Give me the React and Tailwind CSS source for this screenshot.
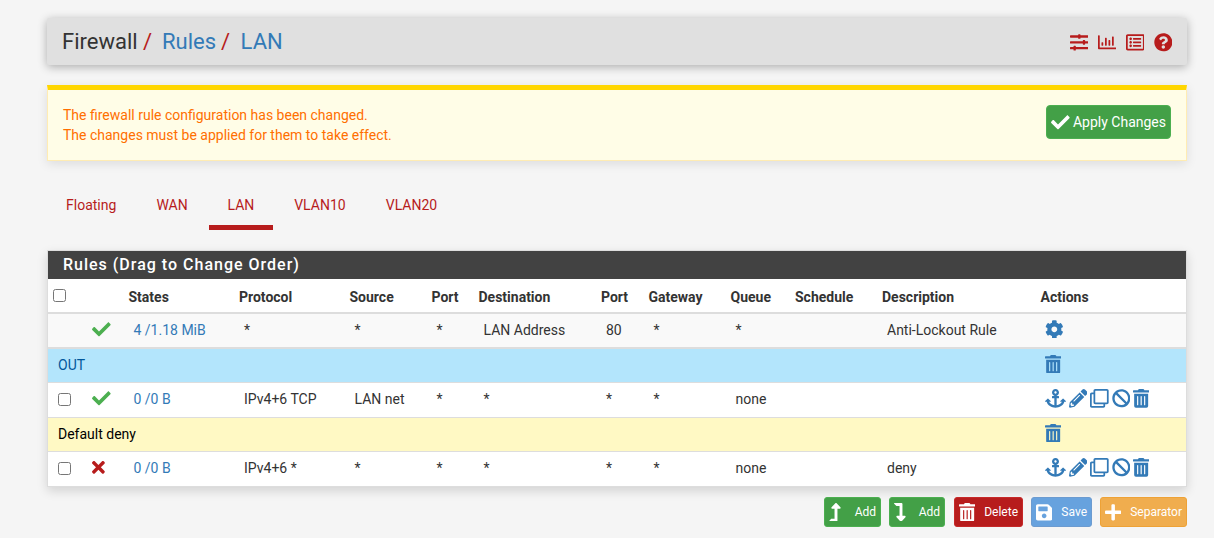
import {
  FaSlidersH, FaRegChartBar, FaRegListAlt, FaQuestionCircle, FaCheck, FaTimes, FaCog,
  FaTrashAlt, FaAnchor, FaPencilAlt, FaRegClone, FaBan, FaLevelUpAlt, FaLevelDownAlt, FaSave, FaPlus,
} from "react-icons/fa";

const tabs = ["Floating", "WAN", "LAN", "VLAN10", "VLAN20"];
const headings = ["States", "Protocol", "Source", "Port", "Destination", "Port", "Gateway", "Queue", "Schedule", "Description", "Actions"];

function Icon({ as: Glyph, w = "w-[18.66px]", className = "" }) {
  return (
    <span className={`inline-flex h-[18.66px] shrink-0 items-center justify-center ${w} ${className}`}>
      <Glyph className="h-full w-full" />
    </span>
  );
}

const trashWidth = "w-[16.33px]";

function RuleActions() {
  return (
    <div className="flex items-center gap-[2.8px] text-[#337ab7]">
      <Icon as={FaAnchor} w="w-[21px]" />
      <Icon as={FaPencilAlt} />
      <Icon as={FaRegClone} />
      <Icon as={FaBan} />
      <Icon as={FaTrashAlt} w={trashWidth} />
    </div>
  );
}

function Rule({ check, state, cells, actions, actionsPad = "pb-[3px]", className }) {
  return (
    <tr className={className}>
      <td className="pb-[2px] pl-[10px]">{check && <input type="checkbox" className="block h-[13px] w-[13px]" />}</td>
      <td className="pt-[2px] pl-[10px]">
        {state === "pass" ? (
          <Icon as={FaCheck} className="flex text-[#4caf50]" />
        ) : (
          <Icon as={FaTimes} w="w-[12.83px]" className="flex text-[#b71c1c]" />
        )}
      </td>
      {cells.map((c, i) => (
        <td key={i} className={i === 0 ? "pb-[2px] pl-[10px] text-[#337ab7]" : "pb-[2px] pl-[10px]"}>{c}</td>
      ))}
      <td className={`pl-[9.3px] ${actionsPad}`}>{actions}</td>
    </tr>
  );
}

function Separator({ label, className }) {
  return (
    <tr className={className}>
      <td colSpan={12} className="pb-[2px] pl-[10px]">{label}</td>
      <td className="pt-[2px] pl-[9.3px]"><Icon as={FaTrashAlt} w={trashWidth} className="flex text-[#337ab7]" /></td>
    </tr>
  );
}

function Button({ icon, label, iconWidth, className }) {
  return (
    <button className={`flex h-[30px] items-center justify-between rounded-[3px] border px-[4px] text-[12px] text-white ${className}`}>
      <Icon as={icon} w={iconWidth} />
      <span>{label}</span>
    </button>
  );
}

export default function App() {
  return (
    <div className="h-[538px] w-[1214px] overflow-hidden bg-[#f5f5f5] pt-[18px] pr-[27px] pl-[47px] font-[Roboto,sans-serif] text-[14px] leading-[20px] text-[#333]">
      <header className="flex h-[47px] items-center justify-between rounded-[2px] bg-[#e0e0e0] pr-[14.7px] pl-[15px] shadow-[0_2px_10px_rgba(0,0,0,0.3)]">
        <h1 className="flex text-[22px] leading-[24px]">
          <span className="w-[81px]">Firewall</span>
          <span className="w-[19px] text-[#b71c1c]">/</span>
          <span className="w-[59px] text-[#337ab7]">Rules</span>
          <span className="w-[19.6px] text-[#b71c1c]">/</span>
          <span className="text-[#337ab7]">LAN</span>
        </h1>
        <div className="flex gap-[9.3px] pt-[2px] text-[#b71c1c]">
          <Icon as={FaSlidersH} />
          <Icon as={FaRegChartBar} />
          <Icon as={FaRegListAlt} />
          <Icon as={FaQuestionCircle} />
        </div>
      </header>

      <section className="mt-[20px] flex h-[76px] items-start justify-between border border-t-[5px] border-[#ffecb3] border-t-[#ffd600] bg-[#fffde7] pt-[15px] pr-[15px] pl-[15px] text-[#ff6f00] shadow-[0_3px_10px_rgba(0,0,0,0.1)]">
        <p>
          The firewall rule configuration has been changed.
          <br />
          The changes must be applied for them to take effect.
        </p>
        <button className="flex h-[34px] w-[125px] items-center justify-between rounded-[4px] border border-[#4caf50] bg-[#43a047] px-[4px] text-white">
          <Icon as={FaCheck} />
          <span>Apply Changes</span>
        </button>
      </section>

      <nav className="mt-[19px] flex h-[50px] gap-[2px] text-[#b71c1c]">
        {tabs.map((t) => (
          <span
            key={t}
            className={
              t === "LAN"
                ? "w-[64.4px] border-b-5 border-[#b71c1c] text-center pt-[15px]"
                : "border-b-5 border-transparent px-[19.05px] pt-[15px]"
            }
          >
            {t}
          </span>
        ))}
      </nav>

      <section className="mt-[20px] h-[237px] border border-[#ddd] bg-white shadow-[0_4px_10px_rgba(0,0,0,0.14)]">
        <h2 className="h-[28px] bg-[#424242] pl-[15px] text-[16px] leading-[27px] font-medium tracking-[1px] text-white">
          Rules (Drag to Change Order)
        </h2>
        <table className="w-full table-fixed border-separate border-spacing-0 text-left whitespace-nowrap">
          <colgroup>
            <col className="w-[34px]" />
            <col className="w-[41.5px]" />
            <col className="w-[110.5px]" />
            <col className="w-[110.5px]" />
            <col className="w-[82px]" />
            <col className="w-[47px]" />
            <col className="w-[122.5px]" />
            <col className="w-[47.5px]" />
            <col className="w-[82px]" />
            <col className="w-[64.5px]" />
            <col className="w-[87px]" />
            <col className="w-[158.5px]" />
            <col />
          </colgroup>
          <thead>
            <tr className="h-[35px] [&>th]:border-b-2 [&>th]:border-[#ddd] [&>th]:pl-[5px]">
              <th><input type="checkbox" className="block h-[13px] w-[13px]" /></th>
              <th />
              {headings.map((h, i) => (
                <th key={i} className="pt-[3px] font-bold">{h}</th>
              ))}
            </tr>
          </thead>
          <tbody>
            <Rule
              className="h-[35px] bg-[#f9f9f9] [&>td]:border-b-2 [&>td]:border-[#ddd]"
              state="pass"
              cells={["4 /1.18 MiB", "*", "*", "*", "LAN Address", "80", "*", "*", "", "Anti-Lockout Rule"]}
              actions={<Icon as={FaCog} className="flex text-[#337ab7]" />}
              actionsPad="pt-[2px]"
            />
            <Separator label="OUT" className="h-[34px] bg-[#b3e5fc] text-[#01579b] [&>td]:border-b [&>td]:border-[#ddd]" />
            <Rule
              check
              className="h-[35px] bg-white [&>td]:border-b [&>td]:border-[#ddd]"
              state="pass"
              cells={["0 /0 B", "IPv4+6 TCP", "LAN net", "*", "*", "*", "*", "none", "", ""]}
              actions={<RuleActions />}
            />
            <Separator label="Default deny" className="h-[34px] bg-[#fff9c4] text-black [&>td]:border-b [&>td]:border-[#ddd]" />
            <Rule
              check
              className="h-[34px] bg-white"
              state="block"
              cells={["0 /0 B", "IPv4+6 *", "*", "*", "*", "*", "*", "none", "", "deny"]}
              actions={<RuleActions />}
            />
          </tbody>
        </table>
      </section>

      <div className="mt-[10px] flex justify-end gap-[8px]">
        <Button icon={FaLevelUpAlt} iconWidth="w-[11.66px]" label="Add" className="w-[57px] border-[#4caf50] bg-[#43a047]" />
        <Button icon={FaLevelDownAlt} iconWidth="w-[11.66px]" label="Add" className="w-[56px] border-[#4caf50] bg-[#43a047]" />
        <Button icon={FaTrashAlt} iconWidth={trashWidth} label="Delete" className="ml-px w-[69px] border-[#c62828] bg-[#b71c1c]" />
        <Button icon={FaSave} iconWidth={trashWidth} label="Save" className="w-[61px] border-[#6c9bd0] bg-[#67a2de]" />
        <Button icon={FaPlus} iconWidth={trashWidth} label="Separator" className="w-[87px] border-[#eea236] bg-[#f0ad4e]" />
      </div>
    </div>
  );
}
